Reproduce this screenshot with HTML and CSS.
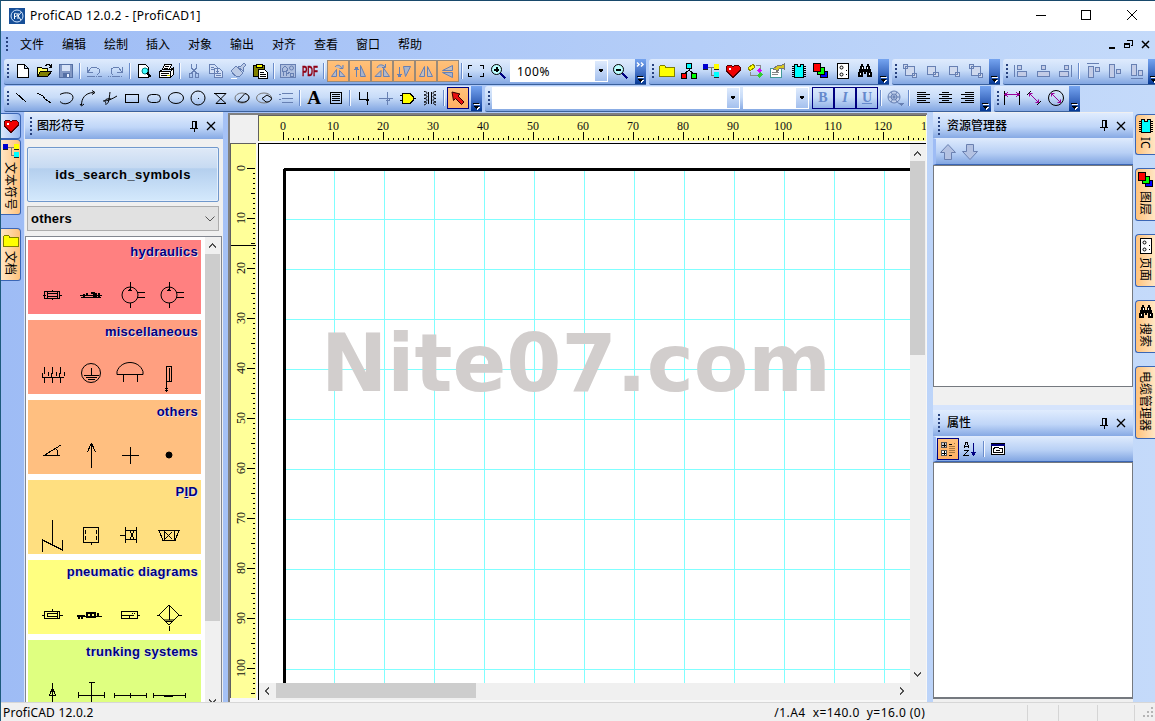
FILE: index.html
```html
<!DOCTYPE html>
<html lang="zh-CN">
<head>
<meta charset="utf-8">
<title>ProfiCAD 12.0.2 - [ProfiCAD1]</title>
<link rel="stylesheet" href="styles.css">
</head>
<body>
<svg class="defs" width="0" height="0">
  <defs>
    <symbol id="heart" viewBox="0 0 16 16"><path d="M8 14.500L1 7.500V4l2-2h3l2 2 2-2h3l2 2v3.500z" fill="#f00000" stroke="#500000"/><path d="M3.500 4.500h2v2h-2z" fill="#fff"/></symbol>
    <symbol id="folder" viewBox="0 0 16 16"><path d="M.5 13.500v-10l1-1h4l1 1.500h8l1 1v8.500z" fill="#ff0" stroke="#808000"/></symbol>
    <symbol id="linked" viewBox="0 0 16 16"><path d="M5 4h6M8 4v8h4" fill="none" stroke="#777"/><path d="M0 1h5v5H0z" fill="#0000d0"/><path d="M11 1h5v5h-5z" fill="#ff0"/><path d="M11 9h5v5h-5z" fill="#0ff"/><path d="M0 6.500h5M11 6.500h5M11 14.500h5" stroke="#222"/></symbol>
    <symbol id="chip" viewBox="0 0 16 16"><path d="M1 3.500h14M1 5.500h14M1 7.500h14M1 9.500h14M1 11.500h14M1 13.500h14" stroke="#000"/><path d="M3.500 1.500h3v2h3v-2h3v13h-9z" fill="#0ff" stroke="#000"/></symbol>
    <symbol id="layers" viewBox="0 0 16 16"><path d="M7.500 8.500h7v6h-7z" fill="#00f" stroke="#000"/><path d="M4.500 4.500h7v7h-7z" fill="#0f0" stroke="#000"/><path d="M.5.500h7v8h-7z" fill="#f00" stroke="#000"/></symbol>
    <symbol id="pageholes" viewBox="0 0 16 16"><path d="M2.500.500h11v15h-11z" fill="#fff" stroke="#000"/><circle cx="6.500" cy="4.500" r="1.500" fill="#fff" stroke="#000"/><circle cx="6.500" cy="11.500" r="1.500" fill="#fff" stroke="#000"/><path d="M11 7.500h1M11 11.500h1" stroke="#000"/></symbol>
    <symbol id="binoc" viewBox="0 0 16 16"><path d="M4 1h2v2h1v3h2V3h1V1h2v2h1v3h1v3h1v5h-5V9H9v2H7V9H6v5H1V9h1V6h1V3h1z" fill="#000"/><path d="M5.500 4v2M3.500 10v2M12.500 10v2M10.500 4v2" stroke="#fff"/></symbol>
    <symbol id="pin" viewBox="0 0 10 11"><path d="M3 .5h5M3.500.500v6M6.500.500v6M7.500.500v6M1 7h8M5 7v4" fill="none" stroke="#000"/></symbol>
    <symbol id="close" viewBox="0 0 10 10"><path d="M1 1l8 8M9 1L1 9" fill="none" stroke="#000" stroke-width="1.300"/></symbol>
    <symbol id="more" viewBox="0 0 11 25"><path d="M2 17h6v1H2zM2 20h6l-3 3z"/><path d="M3 18h6v1H3zM3.500 21h5.500l-3 3z" fill="#fff"/><path d="M2 20h6L5 23z"/></symbol>
    <symbol id="drop" viewBox="0 0 12 22"><path d="M3 9h6l-3 4z" fill="#000"/></symbol>
  </defs>
</svg>
<div class="window">
  <header class="titlebar">
    <svg class="logo" width="16" height="16"><path d="M0 0h16v16H0z" fill="#174f98"/><circle cx="8" cy="8" r="6" fill="none" stroke="#cfe4ff"/><path class="aa" d="M5.500 11V5.500c3-1 4 3 .5 3M12.500 4L9 8l3 4M9 5v6" fill="none" stroke="#fff"/></svg>
    <span class="caption">ProfiCAD 12.0.2 - [ProfiCAD1]</span>
    <svg class="winbtns" width="120" height="30" fill="none" stroke="#000"><path d="M1 14.500h10M46.500 9.500h9v9h-9z"/><path class="aa" d="M92 9l10 10M102 9l-10 10"/></svg>
  </header>
  <nav class="menubar">
    <i class="grip"></i>
    <span>文件</span><span>编辑</span><span>绘制</span><span>插入</span><span>对象</span><span>输出</span><span>对齐</span><span>查看</span><span>窗口</span><span>帮助</span>
    <svg class="mdibtns" width="48" height="14"><path d="M3 9h6v2H3z"/><path d="M21.500 3v-.5h5v5h-2M18.500 5.500h5v4h-5zM18 6h6M21 2.500h6" fill="none" stroke="#000" stroke-width="1.200"/><path class="aa" d="M36 3l7 7M43 3l-7 7" stroke="#000" stroke-width="1.500"/></svg>
  </nav>
  <div class="dock">
    <div class="row">
      <div class="bar b1"><i class="grip"></i>
        <svg class="ic"><path d="M3.500 1.500h7l4 4v9h-11zM10.500 1.500v4h4" fill="#fff" stroke="#000"/></svg>
        <svg class="ic"><path d="M1.500 13.500v-9h4l1 1h5v3" fill="#ff6" stroke="#000"/><path d="M1.500 13.500l3-5h11l-4 5z" fill="#808000" stroke="#000"/><path d="M9 2.500h1l1-1h2l2 2M15.500 1v3h-3" fill="none" stroke="#000"/></svg>
        <svg class="ic"><path d="M1.500 1.500h13v13h-13z" fill="#8298c4" stroke="#5570a5"/><path d="M4 2h8v6H4z" fill="#d7e3f7"/><path d="M5 10h7v4H5z" fill="#5570a5"/><path d="M9 11h2v3H9z" fill="#e6efff"/></svg>
        <i class="sep"></i>
        <svg class="ic dis"><path d="M1.500 4v5.500H7M2 9l3-4 4-1 4 2v4l-2 2"/><path d="M1 13.500h15" stroke-dasharray="8 1 1 1"/></svg>
        <svg class="ic dis"><path d="M14.500 4v5.500H9M14 9l-3-4-4-1-4 2v4l2 2"/><path d="M0 13.500h15" stroke-dasharray="1 1 1 1 8"/></svg>
        <i class="sep"></i>
        <svg class="ic"><path d="M2.500 1.500h7l3 3v10h-10z" fill="#fff" stroke="#000"/><circle cx="9" cy="8" r="3" fill="#4ff" stroke="#008080"/><path d="M11 10l4 4" stroke="#000" stroke-width="2"/></svg>
        <svg class="ic"><path d="M4.500 6.500l2-5h7l-2 5M1.500 8.500l3-2h8l3-2v7l-3 3h-11zM1.500 8.500h11l3-4M12.500 8.500v6" fill="#fff" stroke="#000"/><path d="M7 3.500h4M6 5.500h4M3 10.500h8M3 12.500h8" stroke="#000"/><path d="M9 12h3" stroke="#dd0"/></svg>
        <i class="sep"></i>
        <svg class="ic dis"><path d="M5.500 1v4l5 5M10.500 1v4l-5 5M3.500 10.500h3v4h-3zM9.500 10.500h3v4h-3z"/></svg>
        <svg class="ic dis"><path d="M1.500 1.500h5l3 3v6h-8zM6.500 5.500h5l3 3v6h-8z" fill="#d3e0f6"/><path d="M3 4.500h3M3 6.500h3M8 8.500h3M8 10.500h5M8 12.500h5"/></svg>
        <svg class="ic dis"><path d="M1 8l5-5 7 7-4 4c-3 0-6-3-8-6zM8 4l3-1 3-3 2 2-3 3v3z" fill="#bccbe6"/><path d="M1 15.500h6" stroke="#fff"/></svg>
        <svg class="ic"><path d="M1.500 2.500h11v11h-11z" fill="#808000" stroke="#000"/><path d="M4 1.500h6v3H4z" fill="#ff0" stroke="#000"/><path d="M6.500 6.500h6l3 3v6h-9z" fill="#fff" stroke="#000"/><path d="M8 9.500h4M8 11.500h6M8 13.500h6" stroke="#000"/></svg>
        <i class="sep"></i>
        <svg class="ic dis"><path d="M.5 1.500h15v13H.5z" fill="#aebfdf"/><path d="M3.500 13V9L2 6l3-3 3 3-2 3v4M10.500 10.500h3v3h-3zM2 8.500h4M6 12l4-3"/><circle cx="11.500" cy="5" r="2"/></svg>
        <span class="pdf"><b>PDF</b></span>
        <i class="sep"></i>
        <span class="tog"><svg class="ic dis"><path class="aa" d="M1.500 13.500l5-7v7zM9.500 13.500v-6l5.500 6zM5 4c2-3 6-2 7 2M9.500 5.500h3.500V2" fill="#b5b9c8"/></svg></span>
        <span class="tog"><svg class="ic dis"><path d="M4.500 14V4M2 6.500h5M3 5h3" stroke-width="1.500"/><path class="aa" d="M8.500 13.500v-11l5 11z" fill="#a9b3ca"/></svg></span>
        <span class="tog"><svg class="ic dis"><path class="aa" d="M1 13.500l6-6v6zM9.500 5v8.500h6zM3 5c1-4 6-4 8-1M8 4.500h3.500V1" fill="#b5b9c8"/></svg></span>
        <span class="tog"><svg class="ic dis"><path d="M3.500 4v10M1 11.500h5M2 13h3" stroke-width="1.500"/><path class="aa" d="M7.500 3.500h7l-5 10z" fill="#a9b3ca"/></svg></span>
        <span class="tog"><svg class="ic dis"><path class="aa" d="M1.500 13.500l5-10v10zM9.500 3.500v10h5z" fill="#c4bdbc"/></svg></span>
        <span class="tog"><svg class="ic dis"><path class="aa" d="M2.500 7.500l10-5v5z" fill="#c4bdbc"/><path class="aa" d="M2.500 9.500h10v5z" fill="#a9b3ca"/></svg></span>
        <i class="sep"></i>
        <svg class="ic ln"><path d="M4 2.500H.5V6M.5 10v3.500H4M12 2.500h3.500V6M15.500 10v3.500H12"/></svg>
        <svg class="ic"><circle cx="6.500" cy="6.500" r="5" fill="#bff" stroke="#000"/><path d="M4 6.500h5M6.500 4v5" stroke="#000" stroke-width="2"/><path d="M10.500 10.500l5 5" stroke="#000080" stroke-width="2.500"/></svg>
        <span class="combo zoomcombo">100%<svg class="dd"><use href="#drop"/></svg></span>
        <svg class="ic"><circle cx="6.500" cy="6.500" r="5" fill="#bff" stroke="#000"/><path d="M4 6.500h5" stroke="#000" stroke-width="2"/><path d="M10.500 10.500l5 5" stroke="#000080" stroke-width="2.500"/></svg>
        <svg class="over"><path class="aa" d="M2 3.500l2 2-2 2M6 3.500l2 2-2 2" stroke="#fff" stroke-width="1.500" fill="none"/><use href="#more"/></svg>
      </div>
      <div class="bar b2"><i class="grip"></i>
        <svg class="ic"><use href="#folder"/></svg>
        <svg class="ic"><path d="M8 5v3M3 11l5-4 5 4" fill="none" stroke="#000"/><path d="M5.500.500h5v5h-5z" fill="#0ff" stroke="#000"/><path d="M.5 10.500h5v5h-5z" fill="#f00" stroke="#000"/><path d="M10.500 10.500h5v5h-5z" fill="#0f0" stroke="#000"/></svg>
        <svg class="ic"><use href="#linked"/></svg>
        <svg class="ic"><use href="#heart"/></svg>
        <svg class="ic"><path d="M1 5l5-4 2 3-5 4z" fill="#ff0" stroke="#880"/><path d="M9 2.500h4v4M3 9v3h7" fill="none" stroke="#888"/><path d="M10 7l3-2 2 3-3 2z" fill="#d0f"/><path d="M10 12l4-3 2 3-4 3z" fill="#3c3"/></svg>
        <svg class="ic"><path d="M1.500 5.500h11v9h-11z" fill="#fff" stroke="#499"/><path d="M3 9.500h7M3 11.500h6" stroke="#888"/><path d="M4 6l5-4 2 1 4-2v5l-4-1-3 4-1-2z" fill="#d8c820" stroke="#777"/></svg>
        <svg class="ic"><use href="#chip"/></svg>
        <svg class="ic"><use href="#layers"/></svg>
        <svg class="ic"><use href="#pageholes"/></svg>
        <svg class="ic"><use href="#binoc"/></svg>
        <svg class="over"><use href="#more"/></svg>
      </div>
      <div class="bar b3"><i class="grip"></i>
        <svg class="ic dis"><path d="M1.500 1.500h4v4h-4zM10.500 10.500h4v4h-4zM3.500 3.500h9v9h-9z" fill="#cfd9ee"/></svg>
        <svg class="ic dis"><path d="M9.500 9.500h5v4h-5zM3.500 3.500h8v8h-8z" fill="#cfd9ee"/></svg>
        <svg class="ic dis"><path d="M3.500 3.500h8v8h-8zM9.500 9.500h4v4h-4z" fill="#cfd9ee"/></svg>
        <svg class="ic dis"><path d="M3.500 3.500h9v9h-9zM1.500 1.500h4v4h-4zM10.500 10.500h4v4h-4z" fill="#cfd9ee"/></svg>
        <svg class="over"><use href="#more"/></svg>
      </div>
      <div class="bar b4"><i class="grip"></i>
        <svg class="ic dis"><path d="M1.500 2v12M4.500 2.500h4v4h-4zM4.500 8.500h9v5h-9z" fill="#c3cce6"/></svg>
        <svg class="ic dis"><path d="M6.500 2.500h4v4h-4zM2.500 8.500h12v5h-12z" fill="#c3cce6"/></svg>
        <svg class="ic dis"><path d="M14.500 2v12M7.500 2.500h4v4h-4zM2.500 8.500h9v5h-9z" fill="#c3cce6"/></svg>
        <i class="sep"></i>
        <svg class="ic dis"><path d="M2 .5h12M3.500 3.500h5v11h-5zM10.500 4.500h4v4h-4z" fill="#c3cce6"/></svg>
        <svg class="ic dis"><path d="M2.500 1.500h5v13h-5zM9.500 6.500h4v4h-4z" fill="#c3cce6"/></svg>
        <svg class="ic dis"><path d="M2 15.500h12M2.500 1.500h5v11h-5zM9.500 7.500h4v5h-4z" fill="#c3cce6"/></svg>
        <svg class="over"><use href="#more"/></svg>
      </div>
    </div>
    <div class="row">
      <div class="bar c1"><i class="grip"></i>
        <svg class="ic ln"><path d="M2 3l10 9"/></svg>
        <svg class="ic ln"><path d="M1 3l6 3 2 3 6 4"/></svg>
        <svg class="ic ln"><path class="aa" d="M2 4.500c5-3 13-2 13 3s-9 9-13 4"/></svg>
        <svg class="ic ln"><path class="aa" d="M1.500 15c0-6 3-12 12-12.500M12 .5l3 2-3 2M0 14l1.500 2L4 14"/></svg>
        <svg class="ic ln"><path class="aa" d="M3 14c4 1 4-5 5-12M1 11c5 0 9-2 14-5M4 13c-3-3 1-5 5-4"/></svg>
        <svg class="ic ln"><path d="M1.500 4.500h13v8h-13z"/></svg>
        <svg class="ic ln"><rect x="1.500" y="4.500" width="13" height="8" rx="4"/></svg>
        <svg class="ic ln"><ellipse cx="8" cy="8" rx="7.500" ry="5.500"/></svg>
        <svg class="ic ln"><circle cx="8" cy="8" r="7"/><path d="M7.500 8.500h1"/></svg>
        <svg class="ic ln"><path class="aa" d="M2 3.500h12L4 13.500h10L3 3.500"/></svg>
        <svg class="ic ln"><ellipse cx="8" cy="8" rx="7" ry="5" stroke="#777"/><path class="aa" d="M4 11l7-7.500c4 1 5 4 3 6.500s-7 3-10 1"/></svg>
        <svg class="ic ln"><ellipse cx="8" cy="8" rx="7.500" ry="5" stroke="#777"/><path class="aa" d="M11 5L6 8.500l4 3.500c4 0 6-2 5.500-4.500M11 5l4 2.500"/></svg>
        <svg class="ic dis"><path d="M4 3.500h11M4 8.500h11M4 12.500h11M1 4.500h2M1 9.500h2"/></svg>
        <i class="sep"></i>
        <span class="biga">A</span>
        <svg class="ic ln"><path d="M2.500 2.500h11v11h-11zM4 4.500h8M4 6.500h8M4 8.500h8M4 10.500h8"/></svg>
        <i class="sep"></i>
        <svg class="ic ln"><path d="M3.500 2v7.500H12M11.500 2v13M10 10h3" stroke-width="1.200"/></svg>
        <svg class="ic dis"><path d="M1 8.500h14M9.500 2v13M8 8h3v2H8"/></svg>
        <svg class="ic"><path d="M0 5.500h3M0 10.500h3M12 8.500h4" stroke="#000"/><path d="M2.500 3.500H10l3 3v4l-3 3H2.500z" fill="#ff0" stroke="#000"/></svg>
        <svg class="ic ln"><path class="aa" d="M2 1.500c4 0 4 3 0 3.500 4 0 4 3 0 3.500 4 0 4 3 0 3.500 4 0 3 2 0 3M14 1.500c-4 0-4 3 0 3.500-4 0-4 3 0 3.500-4 0-4 3 0 3.500-4 0-3 2 0 3"/><path d="M6.500 2v12M9.500 2v12"/></svg>
        <i class="sep"></i>
        <span class="tog act"><svg class="ic"><path class="aa" d="M2 2l8 2-2 2 6 6-2.500 2.500-6-6-2 2z" fill="#e81010" stroke="#300"/></svg></span>
        <svg class="over"><use href="#more"/></svg>
      </div>
      <div class="bar c2"><i class="grip"></i>
        <span class="combo fontcombo"><svg class="dd"><use href="#drop"/></svg></span>
        <span class="combo sizecombo"><svg class="dd"><use href="#drop"/></svg></span>
        <span class="fmt">B</span><span class="fmt it">I</span><span class="fmt un">U</span>
        <i class="sep"></i>
        <svg class="ic dis"><circle cx="7" cy="7" r="6" fill="#c3d2ec"/><circle cx="7" cy="7" r="3"/><path class="aa" d="M1 7h12M4 2l6 10M10 2L4 12M10 11c1 3 3 3 5 3"/><path d="M12 13h5l-2.500 3z" fill="#6780b3" stroke="none"/></svg>
        <i class="sep"></i>
        <svg class="ic ln"><path d="M2 2.500h9M2 4.500h13M2 6.500h9M2 8.500h13M2 10.500h9M2 12.500h13"/></svg>
        <svg class="ic ln"><path d="M5 2.500h7M2 4.500h13M5 6.500h7M2 8.500h13M5 10.500h7M2 12.500h13"/></svg>
        <svg class="ic ln"><path d="M6 2.500h9M2 4.500h13M6 6.500h9M2 8.500h13M6 10.500h9M2 12.500h13"/></svg>
        <svg class="over"><use href="#more"/></svg>
      </div>
      <div class="bar c3"><i class="grip"></i>
        <svg class="ic ln"><path d="M.5 1v14M15.500 1v14"/><path d="M1 4.500h14M4 2L1 4.500 4 7M12 2l3 2.500L12 7" stroke="#909"/></svg>
        <svg class="ic ln"><path class="aa" d="M1 5l4-4M11 15l4-4"/><path class="aa" d="M3.500 3.500l9 9M3.500 6.500v-3h3M12.500 9.500v3h-3" stroke="#909"/></svg>
        <svg class="ic ln"><circle cx="8" cy="8" r="7.500"/><path class="aa" d="M3.500 3.500l9 9M3.500 6.500v-3h3M12.500 9.500v3h-3" stroke="#909"/></svg>
        <svg class="over"><use href="#more"/></svg>
      </div>
    </div>
  </div>

  <main class="work">
    <aside class="ltabs">
      <div class="tab cool"><svg class="ti"><use href="#heart"/></svg></div>
      <div class="tab t1"><svg class="ti"><use href="#linked"/></svg><span>文本符号</span></div>
      <div class="tab t2"><svg class="ti"><use href="#folder"/></svg><span>文档</span></div>
    </aside>

    <section class="left">
      <div class="phead"><i class="grip"></i><b>图形符号</b><svg class="pin"><use href="#pin"/></svg><svg class="close"><use href="#close"/></svg></div>
      <button class="search">ids_search_symbols</button>
      <div class="select">others<svg width="10" height="6"><path class="aa" d="M.5.500l4.500 4.500 4.500-4.500" fill="none" stroke="#555"/></svg></div>
      <div class="list">
        <div class="cards">
          <div class="card hyd"><h3>hydraulics</h3><div class="syms">
            <svg><path d="M-7.500-3.500h15v7h-15zM-9 .5h3M7 .5h3M-5-1.500H5M-5 1.500H5M-4.500-3v6M5.500-3v6M0-5v1M0 4v1"/></svg>
            <svg><path d="M-11 .5h22M-7-1v3M-4-2v3M0-2h3v4M5-2v4M8-2v4M-10 2.500H10" stroke-width="1.300"/></svg>
            <svg><circle r="8"/><path d="M0-13v5M0 8v5M8-2.500h7M8 2.500h7M-2-5h4M-1-6h2M0-8v4"/></svg>
            <svg><circle r="8"/><path d="M0-13v5M0 8v5M8-2.500h7M8 2.500h7M-2-5h4M-1-6h2M0-8v4"/></svg></div></div>
          <div class="card mis"><h3>miscellaneous</h3><div class="syms">
            <svg><path d="M-10 2.500H12M-7.500-8v6M.5-8v6M8.500-8v6M-8-5v4M0-5v4M8-5v4M-10-2v4M-1-2v4M7-2v4M-8 3v5M0 3v5M8 3v5M-4-3v4M4-3v4M12-3v4"/></svg>
            <svg><circle cy="-2" r="9.500"/><path d="M.5-7V.5M-7 .5H8M-5 2.500H6M-3 4.500H4"/></svg>
            <svg><path class="aa" d="M-13-.5v-3c4-12 22-12 26 0v3"/><path d="M-13-.5h26M-6.500 0v7M7.500 0v7"/></svg>
            <svg><path d="M-2.500-8.500h5v15h-5zM.5-7V7M-2.500 7v10M-4 13.500h3M-4 15.500h3"/></svg></div></div>
          <div class="card oth"><h3>others</h3><div class="syms">
            <svg><path d="M9-10L-8 .5H8M4-6c2 2 2 4 1 6"/></svg>
            <svg><path d="M.5 13v-25l-4 9M.5-12l4 9M-1-10h3"/></svg>
            <svg><path d="M-8 .5H9M.5-8V9"/></svg>
            <svg><circle r="3" fill="#000"/></svg></div></div>
          <div class="card pid"><h3>P<u>I</u>D</h3><div class="syms">
            <svg><path d="M.5-15v26M-9.500 17V5l20 10V5v11"/></svg>
            <svg><path d="M-7.500-7.500h15v15h-15zM0 7v3"/><path d="M-5.500-5v10M5.500-5v10" stroke-dasharray="4 2"/></svg>
            <svg><path d="M-10 .5h5M-4.500-8V8M-4-4.500h10v9H-4M6.500-8V8M0-4l4 8M4-4L0 4"/></svg>
            <svg><path d="M-10-4.500H10l-4 10H-6zM-5-4v9M5-4v9"/><path class="aa" d="M-4-3l7 7M3-3l-7 7"/></svg></div></div>
          <div class="card pne"><h3>pneumatic diagrams</h3><div class="syms">
            <svg><path d="M-7.500-3.500h15v7h-15zM-10 .5h3M7 .5h4M-4.500-2v4M5.500-3v6M-5 1.500H5M-5-1.500H5M0-6v3"/></svg>
            <svg><path d="M-14 1.500h25M-12 0v4M-9 0v4M-4-2h8v4h-8zM0-3v6M7-2v4M-14 .5h8" stroke-width="1.200"/></svg>
            <svg><path d="M-8.500-3.500h16v7h-16zM-9 .5H0M7 .5h3M-1 0v3M-6 .5h10"/><path d="M2-1.500h4" stroke-dasharray="1"/></svg>
            <svg><path class="aa" d="M0-10L10 0 0 10-10 0zM-5 5H5"/><path d="M0-10V5M-3 6.500h6M0 11v5M-12 .5h2M10 .5h3"/></svg></div></div>
          <div class="card tru"><h3>trunking systems</h3><div class="syms">
            <svg><path d="M.5-12V8M-2.500 0l3-7 3 7zM-7 7h4M5 7h4"/></svg>
            <svg><path d="M-13 .5h27M.5-12V8M-2-12.500h6M-12.500-3v6M13.500-3v6"/></svg>
            <svg><path d="M-16 .5h33M-15.500-2v5M.5-2v5M16.500-2v5"/></svg>
            <svg><path d="M-16 .5h33M-15.500-2v5M16.500-2v5M-5 1.500H4"/></svg></div></div>
        </div>
        <div class="vscroll"><svg width="15" height="17"><path d="M4 10.500L7.500 7l3.500 3.500" fill="none" stroke="#505050" stroke-width="1.800"/></svg><i></i><svg class="end" width="15" height="6"><path d="M4 3.500L7.500 7 11 3.500" fill="none" stroke="#505050" stroke-width="1.800"/></svg></div>
      </div>
    </section>

    <section class="drawing">
      <div class="corner"></div>
      <svg class="hruler" width="667" height="25">
        <defs>
          <pattern id="hs" x="24" width="5" height="25" patternUnits="userSpaceOnUse"><path d="M0 22h1v2H0z"/></pattern>
          <pattern id="hm" x="24" width="25" height="25" patternUnits="userSpaceOnUse"><path d="M0 20h1v4H0z"/></pattern>
          <pattern id="hl" x="24" width="50" height="25" patternUnits="userSpaceOnUse"><path d="M0 16h1v8H0z"/></pattern>
        </defs>
        <path d="M24 0h643v25H24z" fill="url(#hs)"/><path d="M24 0h643v25H24z" fill="url(#hm)"/><path d="M24 0h643v25H24z" fill="url(#hl)"/>
        <g class="nums"><text x="24" y="14">0</text><text x="74" y="14">10</text><text x="124" y="14">20</text><text x="174" y="14">30</text><text x="224" y="14">40</text><text x="274" y="14">50</text><text x="324" y="14">60</text><text x="374" y="14">70</text><text x="424" y="14">80</text><text x="474" y="14">90</text><text x="524" y="14">100</text><text x="574" y="14">110</text><text x="624" y="14">120</text><text x="665" y="14">1</text></g>
      </svg>
      <svg class="vruler" width="25" height="554">
        <defs>
          <pattern id="vs" y="24" width="25" height="5" patternUnits="userSpaceOnUse"><path d="M22 0h2v1h-2z"/></pattern>
          <pattern id="vm" y="24" width="25" height="25" patternUnits="userSpaceOnUse"><path d="M20 0h4v1h-4z"/></pattern>
          <pattern id="vl" y="24" width="25" height="50" patternUnits="userSpaceOnUse"><path d="M16 0h8v1h-8z"/></pattern>
        </defs>
        <path d="M0 24h25v530H0z" fill="url(#vs)"/><path d="M0 24h25v530H0z" fill="url(#vm)"/><path d="M0 24h25v530H0z" fill="url(#vl)"/>
        <path d="M0 101h25v1H0z"/>
        <g class="nums"><text transform="translate(14 24) rotate(-90)">0</text><text transform="translate(14 74) rotate(-90)">10</text><text transform="translate(14 124) rotate(-90)">20</text><text transform="translate(14 174) rotate(-90)">30</text><text transform="translate(14 224) rotate(-90)">40</text><text transform="translate(14 274) rotate(-90)">50</text><text transform="translate(14 324) rotate(-90)">60</text><text transform="translate(14 374) rotate(-90)">70</text><text transform="translate(14 424) rotate(-90)">80</text><text transform="translate(14 474) rotate(-90)">90</text><text transform="translate(14 524) rotate(-90)">100</text></g>
      </svg>
      <div class="view">
        <svg class="paper" width="651" height="539">
          <defs><pattern id="grid" x="25" y="25" width="50" height="50" patternUnits="userSpaceOnUse"><path d="M0 0h50v1H1v49H0z" fill="#80ffff"/></pattern></defs>
          <path d="M27 27h624v512H27z" fill="url(#grid)"/>
          <text class="mark" x="62" y="247">Nite07.com</text>
          <path d="M25 24h626v3H27v512h-3V25z"/>
        </svg>
        <div class="vscroll"><svg width="15" height="17"><path d="M4 11.500L7.500 8l3.500 3.500" fill="none" stroke="#505050" stroke-width="1.800"/></svg><i></i><svg class="end" width="15" height="16"><path d="M4 5.500L7.500 9 11 5.500" fill="none" stroke="#505050" stroke-width="1.800"/></svg></div>
        <div class="hscroll"><svg width="17" height="16"><path d="M10 4.500L6.500 8l3.500 3.500" fill="none" stroke="#505050" stroke-width="1.800"/></svg><i></i><svg class="end" width="17" height="16"><path d="M7 4.500L10.500 8 7 11.500" fill="none" stroke="#505050" stroke-width="1.800"/></svg></div>
      </div>
    </section>

    <section class="right">
      <div class="phead"><i class="grip"></i><b>资源管理器</b><svg class="pin"><use href="#pin"/></svg><svg class="close"><use href="#close"/></svg></div>
      <div class="ptool arrows">
        <svg width="16" height="16"><path class="aa" d="M8 .5l7.500 8h-4v7h-7v-7h-4z" fill="#b4c2e2" stroke="#6a80b0"/></svg>
        <svg width="16" height="16"><path class="aa" d="M8 15.500l7.500-8h-4v-7h-7v7h-4z" fill="#b4c2e2" stroke="#6a80b0"/></svg>
      </div>
      <div class="box res"></div>
      <div class="phead second"><i class="grip"></i><b>属性</b><svg class="pin"><use href="#pin"/></svg><svg class="close"><use href="#close"/></svg></div>
      <div class="ptool props">
        <span class="tog act"><svg class="ic"><path d="M1.500 1.500h5v5h-5z" fill="#ccc" stroke="#555"/><path d="M1.500 9.500h5v5h-5z" fill="#fff" stroke="#555"/><path d="M2 4h4M4 2v4M2 12h4M4 10v4M9 3h3M9 14h3" stroke="#000"/><path d="M9 5.500h6M9 7.500h6M9 9.500h6M9 11.500h6M14 2.500h1" stroke="#a87840"/></svg></span>
        <svg class="ic"><path d="M2 7l2-6h1l2 6M3 5h3M2 9.500h4L2 14.500h5" fill="none" stroke="#000"/><path d="M11.500 2v11M9 11h5l-2.500 3z" fill="#000080" stroke="#000080"/></svg>
        <i class="sep"></i>
        <svg class="ic"><path d="M1.500 2.500h13v11h-13z" fill="#fff" stroke="#000"/><path d="M1 3.500h14" stroke="#000080" stroke-width="2"/><path d="M3.500 11.500v-4l2-1h3l1 1h3v4zM6 9.500h4" fill="#fff" stroke="#000"/></svg>
      </div>
      <div class="box prop"></div>
    </section>

    <aside class="rtabs">
      <div class="tab ic1"><svg class="ti"><use href="#chip"/></svg><span>IC</span></div>
      <div class="tab"><svg class="ti"><use href="#layers"/></svg><span>图层</span></div>
      <div class="tab"><svg class="ti"><use href="#pageholes"/></svg><span>页面</span></div>
      <div class="tab"><svg class="ti"><use href="#binoc"/></svg><span>搜索</span></div>
      <div class="tab cable"><span>电缆管理器</span></div>
    </aside>
  </main>

  <footer class="status">
    <span class="app">ProfiCAD 12.0.2</span>
    <span class="pos">/1.A4&nbsp; x=140.0&nbsp; y=16.0 (0)</span>
    <i class="cell k1"></i><i class="cell k2"></i><i class="cell k3"></i><i class="cell k4"></i>
    <svg class="size" width="12" height="12"><path d="M8 0h2v2H8zM4 4h2v2H4zM8 4h2v2H8zM0 8h2v2H0zM4 8h2v2H4zM8 8h2v2H8z" fill="#b5b5b5"/></svg>
  </footer>
</div>
</body>
</html>
```
FILE: styles.css
```css
* { box-sizing: border-box; }
body { margin: 0; overflow: hidden; font: 12px/16px "Noto Sans", "Noto Sans CJK SC", sans-serif; color: #000; }
svg { flex: none; display: block; shape-rendering: crispEdges; }
.aa, circle, ellipse, rect { shape-rendering: geometricPrecision; }
.defs { position: absolute; }
.window { width: 1155px; height: 721px; display: flex; flex-direction: column; border-top: 1px solid #18496b; border-left: 1px solid #1d5a7c; background: linear-gradient(90deg, #9ebcf5, #c4dafa); }

.titlebar { height: 30px; flex: none; background: #fff; display: flex; align-items: center; padding-left: 8px; }
.caption { margin-left: 5px; flex: 1; white-space: pre; letter-spacing: .27px; }

.menubar { height: 26px; flex: none; display: flex; align-items: center; padding: 1px 1px 0 5px; }
.menubar span { width: 42px; padding-top: 1px; }
.menubar .grip { margin-right: 12px; }
.mdibtns { margin-left: auto; }

.grip { flex: none; width: 2px; height: 15px; background: repeating-linear-gradient(#27417d 0 2px, transparent 2px 4px); }
.dock { flex: none; height: 55px; padding: 2px 0 0 3px; display: flex; flex-direction: column; gap: 1px; }
.row { display: flex; gap: 3px; height: 26px; }
.bar { flex: none; display: flex; align-items: center; height: 26px; padding-bottom: 1px; border-radius: 3px 0 0 2px; border-bottom: 1px solid #3b619c; background: linear-gradient(#dfebfd, #c8dcf8 45%, #82a6e2); }
.bar .grip { margin: 0 2px 0 3px; }
.bar > .over { margin-left: auto; align-self: flex-start; }
.b1 { width: 642px; } .b2 { width: 240px; } .b3 { width: 108px; } .b4 { width: 152px; }
.c1 { width: 478px; } .c2 { width: 506px; } .c3 { width: 86px; }
.ic { width: 22px; height: 16px; padding-left: 3px; padding-right: 3px; overflow: visible; }
.ln { fill: none; stroke: #000; }
.dis { fill: none; stroke: #6780b3; }
.sep { flex: none; width: 2px; height: 16px; margin: 0 2px; border-left: 1px solid #6a8ccb; border-right: 1px solid #f4f8ff; }
.over { width: 11px; height: 25px; background: linear-gradient(#75a4f0, #416fc4 55%, #053995); }
.tog { flex: none; width: 22px; height: 22px; background: linear-gradient(#ffc17a, #ffb063); border: 1px solid #9a8a79; display: flex; align-items: center; justify-content: center; }
.act { border-color: #000080; }
.pdf { width: 22px; display: block; padding-left: 3px; }
.pdf b { display: block; font: bold 15px/18px "Liberation Sans", sans-serif; color: #900014; transform: scaleX(.53); transform-origin: 0 50%; -webkit-text-stroke: .4px #900014; }
.combo { flex: none; height: 22px; background: #fff; display: flex; align-items: center; letter-spacing: .6px; }
.combo .dd { width: 12px; height: 20px; margin: 0 1px 0 auto; background: linear-gradient(#dfebfd, #a4c0ee); }
.zoomcombo { width: 98px; margin: 0 1px; padding: 1px 0 0 7px; }
.zoomcombo .dd { margin-top: -1px; }
.fontcombo { width: 248px; margin-right: 3px; }
.sizecombo { width: 66px; margin-right: 3px; }
.biga { width: 22px; text-align: center; font: bold 19px/22px "Liberation Serif", serif; }
.fmt { width: 22px; height: 22px; border: 1px solid #000080; text-align: center; font: bold 14px/20px "Liberation Serif", serif; color: #6589cc; }
.it { font-style: italic; } .un { text-decoration: underline; }

.work { flex: 1; min-height: 0; display: grid; grid-template-columns: 23px 199px 5px 699px 6px 200px 22px; }
.ltabs { grid-column: 1; padding-top: 1px; }
.tab { width: 20px; border: 1px solid #3b66b5; border-left: 0; border-radius: 0 4px 3px 0; background: linear-gradient(90deg, #ffe6c5, #ffc27b); display: flex; flex-direction: column; align-items: center; padding-top: 4px; }
.tab span { writing-mode: vertical-rl; text-orientation: sideways; line-height: 16px; white-space: nowrap; }
.ti { width: 16px; height: 16px; margin-bottom: 4px; }
.cool { height: 26px; background: linear-gradient(90deg, #dce9fd, #99b9f0); }
.t1 { height: 76px; } .t2 { height: 53px; margin-top: 13px; }
.t1 .ti { margin-bottom: 3px; margin-top: -1px; }
.t2 .ti { margin-bottom: 2px; }
.ltabs span { margin-right: 1px; }
.phead { flex: none; height: 26px; display: flex; align-items: center; padding-left: 5px; background: linear-gradient(#e0ecfe, #c0d6f8 55%, #86a9e4); }
.phead b { margin-left: 6px; font-weight: 500; flex: 1; }
.phead .grip { height: 18px; }
.pin { width: 10px; height: 11px; margin-right: 7px; }
.close { width: 10px; height: 10px; margin-right: 7px; }
#close path { shape-rendering: geometricPrecision; }

.left { grid-column: 2; background: #f0f0f0; border-left: 1px solid #dce8fb; display: flex; flex-direction: column; padding-top: 1px; min-height: 0; }
.left .phead b { margin-left: 5px; }
.search { margin: 8px 4px 0 2px; height: 55px; flex: none; border: 1px solid #7098cc; border-radius: 2px; box-shadow: inset 0 0 0 1px #e4effc; background: linear-gradient(#dfe9f7, #c6daf2 38%, #b4cfee 39%, #d4e9fc); font: bold 13px/20px "Liberation Sans", sans-serif; letter-spacing: .43px; padding: 0; }
.select { margin: 4px 4px 0 2px; height: 25px; flex: none; border: 1px solid #adadad; background: #e1e1e1; display: flex; align-items: center; justify-content: space-between; padding: 0 3px; font: bold 13px/20px "Liberation Sans", sans-serif; letter-spacing: .2px; }
.list { flex: 1; min-height: 0; margin: 5px 1px 0 0; border: 1px solid #828790; border-bottom: 0; background: #fff; display: flex; overflow: hidden; padding-left: 2px; }
.cards { width: 173px; padding-top: 3px; flex: none; display: flex; flex-direction: column; gap: 6px; }
.card { flex: none; height: 74px; width: 173px; }
.card h3 { margin: 0; height: 35px; padding: 4px 3px 0 0; text-align: right; font: bold 13px/16px "Liberation Sans", sans-serif; letter-spacing: .27px; color: #000080; text-shadow: 1px 1px 0 #dfe3ef; }
.syms { display: flex; padding-left: 5px; }
.syms svg { width: 39px; height: 40px; overflow: visible; fill: none; stroke: #000; margin-right: 0; }
.syms svg > * { transform: translate(19px, 20px); }
.hyd { background: #ff8080; } .mis { background: #ff9f80; } .oth { background: #ffbf80; }
.pid { background: #ffdf80; } .pne { background: #ffff80; } .tru { background: #dfff80; }
.vscroll { width: 15px; background: #f0f0f0; display: flex; flex-direction: column; }
.vscroll i { background: #cdcdcd; width: 15px; }
.end { margin-top: auto; }
.list .vscroll { margin-left: auto; width: 16px; }
.list .vscroll i { height: 367px; }

.drawing { grid-column: 4; margin-top: 1px; border: 2px solid #808080; border-right: 0; border-bottom: 0; display: grid; grid-template-columns: 28px 669px; grid-template-rows: 28px 1fr; background: #f7f7f7; }
.corner { background: #f0f0f0; }
.hruler, .vruler { background: #ffff99; }
.hruler { border-left: 1px solid #606060; border-top: 1px solid #606060; width: 668px; height: 26px; }
.vruler { border-left: 1px solid #606060; border-top: 1px solid #606060; width: 26px; height: 555px; }
.nums { font: 12px "Liberation Serif", serif; text-anchor: middle; fill: #111; }
.view { border-top: 1px solid #000; border-left: 1px solid #000; margin-right: 1px; height: 557px; background: #f0f0f0; display: grid; grid-template-columns: 651px 16px; grid-template-rows: 539px 16px; }
.paper { background: #fff; grid-column: 1; }
.mark { font: bold 79.3px "DejaVu Sans", sans-serif; fill: #d2cecd; }
.view .vscroll i { height: 194px; }
.hscroll { display: flex; }
.hscroll i { width: 200px; height: 15px; background: #cdcdcd; }
.hscroll .end { margin-left: auto; margin-top: 0; }

.right { grid-column: 6; display: flex; flex-direction: column; padding-top: 1px; background: #f0f0f0; }
.right .phead { height: 25px; }
.right .phead b { margin-left: 7px; }
.right .second { margin-top: 18px; height: 31px; border-top: 5px solid #d6e4fc; }
.ptool { flex: none; display: flex; align-items: center; height: 27px; border-top: 1px solid #dfeafc; border-bottom: 1px solid #3b66b5; border-left: 3px solid #9ebcf5; background: linear-gradient(#dce9fc, #b8d0f5 55%, #82a6e2); }
.arrows { gap: 6px; padding-left: 4px; }
.props { padding-left: 1px; height: 26px; }
.box { background: #fff; border: 1px solid #75797f; }
.res { height: 222px; flex: none; }
.prop { flex: 1; margin-bottom: 3px; border-bottom-width: 2px; }
.rtabs { grid-column: 7; padding: 2px 0 0 2px; display: flex; flex-direction: column; gap: 13px; }
.rtabs .tab { height: 53px; border: 1px solid #3b66b5; border-right: 0; border-radius: 4px 0 0 3px; background: linear-gradient(90deg, #ffc27b, #ffe6c5); padding-top: 3px; }
.rtabs .ic1 { height: 41px; }
.rtabs .cable { height: 73px; padding-top: 4px; }
.rtabs .ti { margin-bottom: 3px; }
.rtabs span { margin-right: 2px; }

.status { height: 19px; flex: none; background: #f0f0f0; border-top: 1px solid #d7d7d7; display: flex; align-items: center; padding: 2px 0 0 2px; }
.app { width: 772px; letter-spacing: .2px; }
.pos { width: 253px; white-space: nowrap; letter-spacing: .44px; }
.cell { height: 16px; border-left: 1px solid #d5d5d5; }
.k1 { width: 31px; } .k2 { width: 39px; } .k3 { width: 37px; } .k4 { width: 9px; }
```
